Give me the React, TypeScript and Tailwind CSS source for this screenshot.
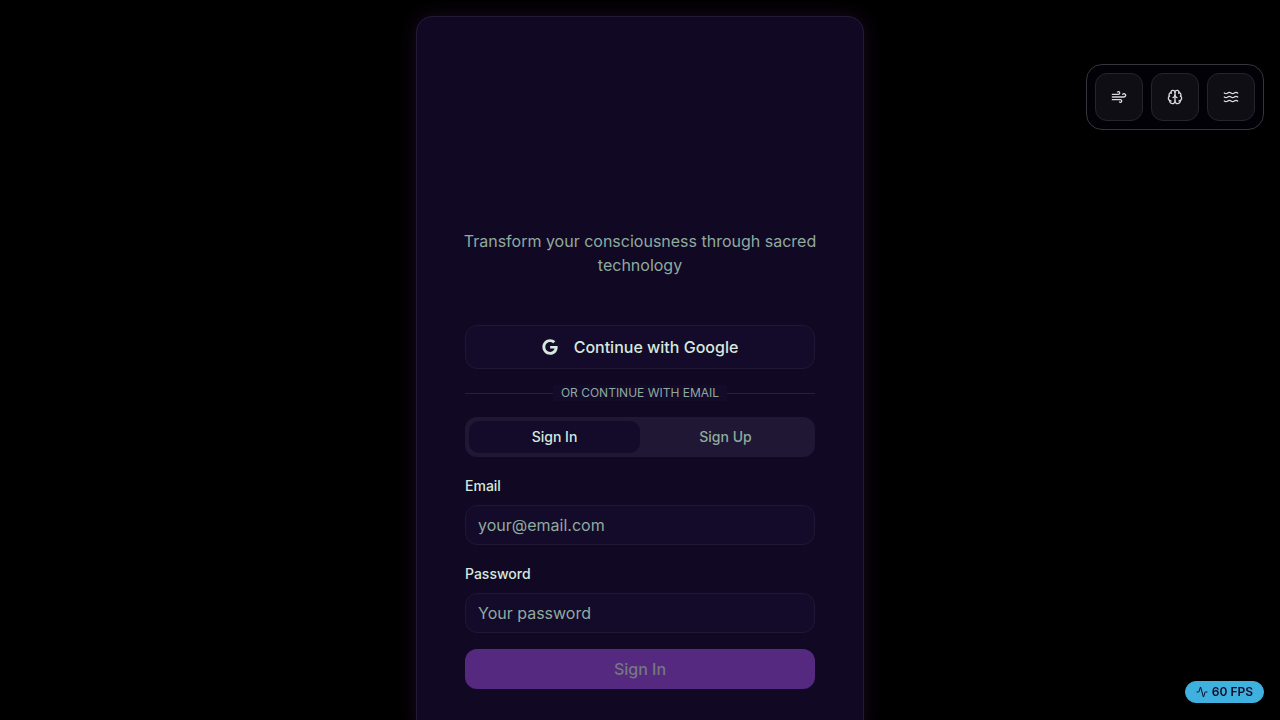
import { useState } from "react";
import { Activity, Brain, Waves, Wind } from "lucide-react";
import { FaGoogle } from "react-icons/fa";

const tools = [
  { label: "Breath", Icon: Wind },
  { label: "Mind", Icon: Brain },
  { label: "Waves", Icon: Waves },
];

function Toolbar() {
  return (
    <div className="fixed top-16 right-4 flex gap-2 rounded-2xl border border-[#36353b] bg-[#030108] p-2">
      {tools.map(({ label, Icon }) => (
        <button
          key={label}
          type="button"
          aria-label={label}
          className="flex size-12 items-center justify-center rounded-xl border border-[#26252b] bg-[#0f0e14] text-[#dcdae0]"
        >
          <Icon className="size-4" />
        </button>
      ))}
    </div>
  );
}

type FieldProps = { id: string; label: string; type: string; placeholder: string };

function Field({ id, label, type, placeholder }: FieldProps) {
  return (
    <div className="space-y-2">
      <div>
        <label htmlFor={id} className="text-sm leading-none font-medium text-[#d6e8dd]">
          {label}
        </label>
      </div>
      <input
        id={id}
        type={type}
        placeholder={placeholder}
        className="flex h-10 w-full rounded-xl border border-[#201733] bg-[#140a2a] px-3 text-base text-[#d6e8dd] outline-none placeholder:text-[#8fab9f]"
      />
    </div>
  );
}

export default function App() {
  const [mode, setMode] = useState<"Sign In" | "Sign Up">("Sign In");

  return (
    <div className="min-h-screen bg-black p-4 font-['Inter',sans-serif]">
      <main className="mx-auto w-full max-w-md rounded-2xl border border-[#241a37] bg-[#110824] p-12 shadow-[0_0_20px_rgba(100,41,130,0.25)]">
        <header className="-mx-2 pt-41 text-center">
          <p className="text-base text-[#8fab9f]">
            Transform your consciousness through sacred technology
          </p>
        </header>

        <div className="mt-12 flex flex-col gap-4">
          <button
            type="button"
            className="flex h-11 w-full items-center justify-center gap-4 rounded-xl border border-[#201733] bg-[#140a2a] text-base font-medium text-[#d6e8dd]"
          >
            <FaGoogle className="size-4" />
            Continue with Google
          </button>

          <div className="flex items-center">
            <span className="h-px flex-1 bg-[#281f3a]" />
            <span className="bg-[#140a2a] px-2 text-xs text-[#8fab9f] uppercase">
              Or continue with email
            </span>
            <span className="h-px flex-1 bg-[#281f3a]" />
          </div>

          <div role="tablist" className="grid h-10 grid-cols-2 rounded-xl bg-[#201735] p-1">
            {(["Sign In", "Sign Up"] as const).map((name) => (
              <button
                key={name}
                type="button"
                role="tab"
                aria-selected={mode === name}
                onClick={() => setMode(name)}
                className="rounded-[10px] text-sm font-medium text-[#8fab9f] aria-selected:bg-[#140a2a] aria-selected:text-[#d6e8dd]"
              >
                {name}
              </button>
            ))}
          </div>

          <form className="flex flex-col gap-4" onSubmit={(e) => e.preventDefault()}>
            <Field id="email" label="Email" type="email" placeholder="your@email.com" />
            <Field id="password" label="Password" type="password" placeholder="Your password" />
            <button
              type="submit"
              disabled
              className="h-10 w-full rounded-xl bg-[#54297f] text-base font-medium text-[#75787f]"
            >
              {mode}
            </button>
          </form>
        </div>
      </main>

      <Toolbar />

      <div className="fixed right-4 bottom-4 mb-px flex items-center gap-1 rounded-full border border-[#3fb1df] bg-[#3fb1df] px-2.5 py-0.5 text-xs font-semibold text-[#140a2a]">
        <Activity className="size-3" />
        60 FPS
      </div>
    </div>
  );
}
